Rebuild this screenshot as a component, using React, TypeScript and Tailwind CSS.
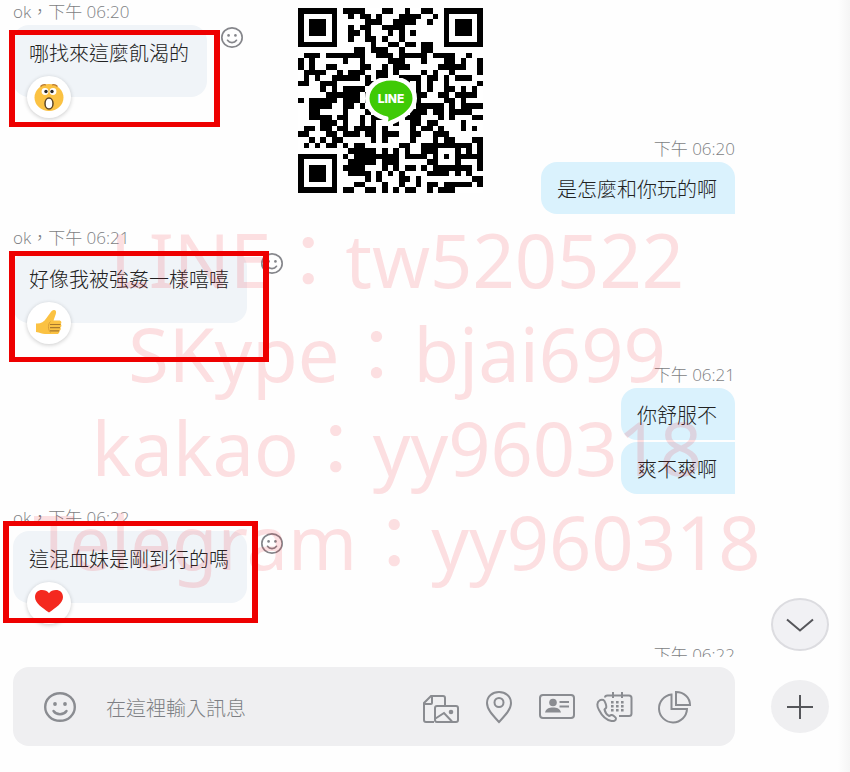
import type { ReactNode } from "react";
import { clsx } from "clsx";

type ReactionKind = "shock" | "like" | "heart";

interface IncomingProps {
  time: string;
  text: string;
  reaction: ReactionKind;
  frame: string;
}

interface OutgoingProps {
  time: string;
  texts: string[];
}

const QR_SIZE = 33;

function inFinder(x: number, y: number) {
  return (x < 8 && y < 8) || (x > QR_SIZE - 9 && y < 8) || (x < 8 && y > QR_SIZE - 9);
}

// Filler modules from a small integer hash
function isDark(x: number, y: number) {
  let hash = Math.imul(x + 11, 374761393) ^ Math.imul(y + 7, 668265263);
  hash = Math.imul(hash ^ (hash >>> 13), 1274126177);
  hash = (hash ^ (hash >>> 16)) >>> 0;
  return hash % 100 < 51;
}

function buildModules() {
  let path = "";
  for (let y = 0; y < QR_SIZE; y++) {
    for (let x = 0; x < QR_SIZE; x++) {
      if (!inFinder(x, y) && isDark(x, y)) {
        path += `M${x} ${y}h1v1h-1z`;
      }
    }
  }
  return path;
}

const QR_MODULES = buildModules();

function Finder({ x, y }: { x: number; y: number }) {
  return (
    <g>
      <rect x={x + 0.5} y={y + 0.5} width="6" height="6" fill="none" stroke="#000" />
      <rect x={x + 2} y={y + 2} width="3" height="3" />
    </g>
  );
}

function QrCode() {
  return (
    <svg viewBox="0 0 33 33" className="size-full" shapeRendering="crispEdges" aria-label="QR">
      <path d={QR_MODULES} />
      <Finder x={0} y={0} />
      <Finder x={26} y={0} />
      <Finder x={0} y={26} />
      <rect x="24" y="24" width="5" height="5" fill="#fff" />
      <rect x="24.5" y="24.5" width="4" height="4" fill="none" stroke="#000" />
      <rect x="26" y="26" width="1" height="1" />
    </svg>
  );
}

function LineBadge() {
  return (
    <span className="absolute top-[70px] left-[66px] h-[55px] w-[54px]">
      <svg viewBox="0 0 54 55" className="size-full">
        <path
          d="M27 2.500C14 2.500 5.500 10.500 5.500 20.500C5.500 29.500 13 36.500 23.500 38.500C25 39 24.500 41 24 43.500C30 41 48.500 34 48.500 20.500C48.500 10.500 40 2.500 27 2.500Z"
          fill="#3fca06"
          stroke="#fff"
          strokeWidth="9"
          strokeLinejoin="round"
          paintOrder="stroke"
        />
      </svg>
      <span className="absolute inset-x-0 top-[14px] text-center font-['Inter',sans-serif] text-xs leading-[14px] font-extrabold text-white">
        LINE
      </span>
    </span>
  );
}

function Smiley({ className }: { className: string }) {
  return (
    <svg viewBox="0 0 32 30" preserveAspectRatio="none" className={className} fill="none" stroke="currentColor" strokeWidth="2.400">
      <ellipse cx="16" cy="15" rx="14.800" ry="13.800" />
      <path d="M9.500 19c3 4.300 10 4.300 13 0" strokeLinecap="round" />
      <circle cx="11" cy="12" r="1.900" fill="currentColor" stroke="none" />
      <circle cx="21" cy="12" r="1.900" fill="currentColor" stroke="none" />
    </svg>
  );
}

function ShockIcon() {
  return (
    <svg viewBox="0 0 30 30" className="size-[30px]">
      <ellipse cx="15" cy="15.500" rx="14.500" ry="13.500" fill="#fbc243" />
      <path d="M6.500 4.500c1.500-1.500 3.500-2.200 5.500-1.500M18 3c2-.7 4 0 5.500 1.500" stroke="#b9772a" strokeWidth="1.300" fill="none" />
      <circle cx="11" cy="9.500" r="3.400" fill="#fff" />
      <circle cx="19" cy="9.500" r="3.400" fill="#fff" />
      <circle cx="12" cy="9.500" r="1.700" fill="#2b2b2b" />
      <circle cx="18" cy="9.500" r="1.700" fill="#2b2b2b" />
      <ellipse cx="15" cy="21.500" rx="4" ry="5.500" fill="#fff" stroke="#5b4528" strokeWidth="1.500" />
    </svg>
  );
}

function LikeIcon() {
  return (
    <svg viewBox="0 0 30 30" className="size-[30px]">
      <path
        d="M2 15.500c4 .5 8-1.500 10.500-5.500l4-5.500c1-1.500 2-2.500 3.500-2.500c2 0 2.500 2 1.800 4l-2.300 6.500h5.500c2.500 0 3 2.500 1.700 3.500c1.200 1.200.9 2.800-.3 3.500c.8 1.300.3 2.800-1 3.400c.3 2-1 3.100-3 3.100H11c-3 0-5-1.500-9-2z"
        fill="#fbc243"
      />
      <path d="M16 16.500h10.500M16 19.700h10M16 22.800h9.300" stroke="#a8782d" strokeWidth="1.200" fill="none" />
      <path d="M16.500 13.500c-2.500 2-3 8 0 11" stroke="#dca036" fill="none" />
    </svg>
  );
}

function HeartIcon() {
  return (
    <svg viewBox="0 0 30 30" className="mb-1 size-[30px]">
      <path
        d="M15 26.500C8 21.500 1 17 1 11C1 6.500 4.300 4 8 4c3 0 5.500 1 7 3.300C16.500 5 19 4 22 4c3.700 0 7 2.500 7 7C29 17 22 21.500 15 26.500Z"
        fill="#f4291f"
      />
    </svg>
  );
}

const REACTIONS: Record<ReactionKind, ReactNode> = {
  shock: <ShockIcon />,
  like: <LikeIcon />,
  heart: <HeartIcon />
};

function Stamp({ children }: { children: ReactNode }) {
  return <p className="mb-[3px] text-[17px] leading-5 font-light whitespace-nowrap text-[#7d7e83]">{children}</p>;
}

function Incoming({ time, text, reaction, frame }: IncomingProps) {
  return (
    <article className="mb-[42px]">
      <Stamp>ok，{time}</Stamp>
      <div className="relative flex items-start gap-3.5">
        <div className="relative h-[72px] rounded-2xl bg-[#f0f4f8] pt-3.5 pr-[18px] pl-4">
          <p className="text-xl leading-[30px] font-light whitespace-nowrap text-[#222]">{text}</p>
          <span className="absolute -bottom-[21px] left-3.5 flex h-[42px] w-11 items-center justify-center rounded-[50%] bg-white shadow-[0_1px_4px_rgba(0,0,0,0.2)]">
            {REACTIONS[reaction]}
          </span>
        </div>
        <button type="button" aria-label="加入回應" className="mt-0.5 text-[#85868b]">
          <Smiley className="h-[21px] w-[22px]" />
        </button>
        <span className={clsx("pointer-events-none absolute z-20 border-[5px] border-x-[6px] border-[#ee0000]", frame)} />
      </div>
    </article>
  );
}

function Outgoing({ time, texts }: OutgoingProps) {
  return (
    <article className="mb-3.5 flex flex-col items-end">
      <Stamp>{time}</Stamp>
      <div className="flex flex-col items-end gap-0.5">
        {texts.map((text, index) => (
          <p
            key={text}
            className={clsx(
              "rounded-l-2xl bg-[#daf2fd] pt-[13px] pr-[18px] pb-[9px] pl-4 text-xl leading-[30px] font-light whitespace-nowrap text-[#222]",
              index === 0 && "rounded-tr-2xl"
            )}
          >
            {text}
          </p>
        ))}
      </div>
    </article>
  );
}

function FilesIcon() {
  return (
    <>
      <path d="M11 31H3a2 2 0 0 1-2-2V12l7-7h12a2 2 0 0 1 2 2v7M2 13h6a1 1 0 0 0 1-1V5" />
      <rect x="12" y="15" width="23" height="16" rx="2" />
      <path d="M12.500 27.500L21 22L29 30.500" />
      <circle cx="28" cy="21" r="2.300" fill="currentColor" stroke="none" />
    </>
  );
}

function PinIcon() {
  return (
    <>
      <path d="M18 31C12 24.500 6 18.500 6 12C6 5.500 11.500 1 18 1S30 5.500 30 12C30 18.500 24 24.500 18 31Z" />
      <circle cx="18" cy="11.500" r="4.500" />
    </>
  );
}

function CardIcon() {
  return (
    <>
      <rect x="1" y="4" width="34" height="23" rx="3" />
      <circle cx="14" cy="11.500" r="3.800" fill="currentColor" stroke="none" />
      <path d="M6 21.500c1-4 4-5 8-5s7 1 8 5z" fill="currentColor" stroke="none" />
      <path d="M20.500 11H30M20.500 15.500H30" />
    </>
  );
}

function CallIcon() {
  return (
    <>
      <path d="M8 6.500C8 5 9 4.500 10.500 4.500H32a2.500 2.500 0 0 1 2.500 2.500v15.500a2.500 2.500 0 0 1-2.500 2.500H22M16 1v6M25 1v6" />
      <path d="M14 11.200h14M14 15.200h14M14 19.200h14" strokeDasharray="2.600 2.400" strokeWidth="2.600" />
      <path
        d="M2.500 9.500C0 11-.500 15 2 19c3 6 7 10 12.500 11c2.500.500 4.500-.800 4.500-2.500c.200-1-3.500-4-4.700-3.500l-2.300 1C9.500 23.500 8 21 7.500 18.500l1.500-1.500c1-1-1-7.500-2.500-8C5 8.500 3.500 8.800 2.500 9.500Z"
        strokeLinejoin="round"
      />
    </>
  );
}

function ChartIcon() {
  return (
    <>
      <path d="M16.500 3.500A14 14 0 1 0 32 18H16.500Z" />
      <path d="M21 1v13H35C35 6.500 29 1 21 1Z" />
    </>
  );
}

const TOOLS = [
  { label: "新增檔案", icon: <FilesIcon /> },
  { label: "位置", icon: <PinIcon /> },
  { label: "連絡人", icon: <CardIcon /> },
  { label: "排定通話", icon: <CallIcon /> },
  { label: "建立投票", icon: <ChartIcon /> }
];

const WATERMARK = ["LINE：tw520522", "SKype：bjai699", "kakao：yy960318", "Telegram：yy960318"];

export default function App() {
  return (
    <main className="relative min-h-screen overflow-hidden bg-[#fefefe] pt-0.5 pl-[13px] font-['Open_Sans','Noto_Sans_CJK_TC',sans-serif]">
      <section className="relative">
        <div className="mr-[115px]">
          <Incoming time="下午 06:20" text="哪找來這麼飢渴的" reaction="shock" frame="-left-1 top-[5px] h-[97px] w-[211px]" />
          <Outgoing time="下午 06:20" texts={["是怎麼和你玩的啊"]} />
          <Incoming time="下午 06:21" text="好像我被強姦一樣嘻嘻" reaction="like" frame="-left-1 top-0 h-[111px] w-[260px]" />
          <Outgoing time="下午 06:21" texts={["你舒服不", "爽不爽啊"]} />
          <Incoming time="下午 06:22" text="這混血妹是剛到行的嗎" reaction="heart" frame="-left-2.5 -top-2.5 h-[102px] w-[255px]" />
          <div className="flex h-3 justify-end overflow-hidden">
            <Stamp>下午 06:22</Stamp>
          </div>
        </div>
        <button
          type="button"
          aria-label="捲動到底部"
          className="absolute right-[21px] bottom-1.5 flex h-[53px] w-[58px] items-center justify-center rounded-[50%] border-2 border-[#dcdce0] bg-[#f1f1f4] text-[#55565a]"
        >
          <svg viewBox="0 0 28 14" className="h-3.5 w-7" fill="none" stroke="currentColor" strokeWidth="2">
            <path d="M1 1.500L14 12.500L27 1.500" />
          </svg>
        </button>
      </section>

      <form className="mt-2.5 flex items-center gap-9 pr-[21px] pb-6" onSubmit={(event) => event.preventDefault()}>
        <div className="flex h-[79px] min-w-0 flex-1 items-center rounded-2xl bg-[#efeff1] pr-11 pl-[31px] text-[#8a8c91]">
          <button type="button" aria-label="表情符號">
            <Smiley className="h-[30px] w-8" />
          </button>
          <input
            type="text"
            aria-label="訊息"
            placeholder="在這裡輸入訊息"
            className="ml-[30px] min-w-0 flex-1 bg-transparent pt-1 text-xl font-light text-[#333] outline-none placeholder:text-[#7d7f84]"
          />
          <div className="flex items-center gap-[22px]">
            {TOOLS.map((tool) => (
              <button key={tool.label} type="button" aria-label={tool.label}>
                <svg viewBox="0 0 36 32" className="h-8 w-9 overflow-visible" fill="none" stroke="currentColor" strokeWidth="2">
                  {tool.icon}
                </svg>
              </button>
            ))}
          </div>
        </div>
        <button
          type="button"
          aria-label="更多"
          className="flex h-[53px] w-[58px] items-center justify-center rounded-[50%] bg-[#efeff1] text-[#55565a]"
        >
          <svg viewBox="0 0 26 24" className="h-6 w-[26px]" fill="none" stroke="currentColor" strokeWidth="2">
            <path d="M13 0V24M0 12H26" />
          </svg>
        </button>
      </form>

      <div className="absolute top-2 left-[298px] size-[185px] bg-white">
        <QrCode />
        <LineBadge />
      </div>

      <div className="pointer-events-none absolute top-[213px] left-0 z-10 w-[794px] text-center font-['Noto_Sans','Noto_Sans_CJK_JP',sans-serif] text-[74px] leading-[94px] whitespace-nowrap text-[#ee1122]/13">
        {WATERMARK.map((line) => (
          <p key={line}>{line}</p>
        ))}
      </div>
      <div className="pointer-events-none absolute inset-y-0 right-0 w-3 bg-linear-to-r from-transparent to-[#f5f5f5]" />
    </main>
  );
}
